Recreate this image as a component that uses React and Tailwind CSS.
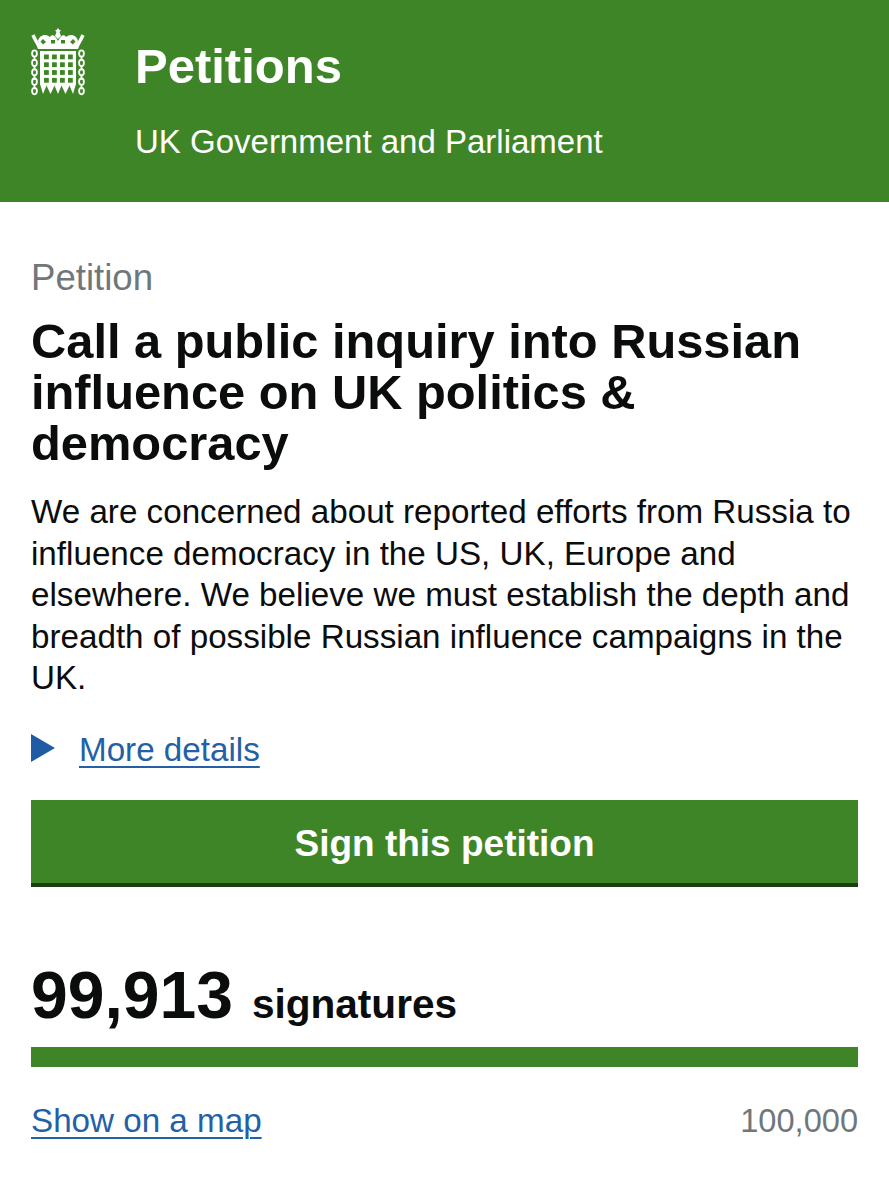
function Logo() {
    const squares = []
    for (let r = 0; r < 4; r++) {
        for (let c = 0; c < 4; c++) {
            squares.push(<rect key={`${r}-${c}`} x={14 + c * 8} y={26.5 + r * 7.8} width="4.8" height="4.8" fill="#3e8527" />)
        }
    }
    const links = [0, 1, 2, 3, 4]
    return (
        <svg width="56" height="68" viewBox="0 0 56 68" className="shrink-0">
            {/* crown */}
            <path d="M3 7 C5 12 8 16 9 19 H47 C48 16 51 12 53 7" fill="none" stroke="white" strokeWidth="3.4" />
            <path d="M8 13 C9 7 16 5 20 9 C22 6 25 7 28 13 C31 7 34 6 36 9 C40 5 47 7 48 13 L46 19 H10 Z" fill="white" />
            <path d="M13 11 l3 3 l-3 2.5 l-2.5 -3z M43 11 l-3 3 l3 2.5 l2.5 -3z M21 12 h4 v3.5 h-4z M31 12 h4 v3.5 h-4z" fill="#3e8527" />
            <path d="M28 0 L29.5 2 L31 2.5 L29.5 4 L31 8 L28 11 L25 8 L26.5 4 L25 2.5 L26.5 2 Z" fill="white" />
            <path d="M8 18.5 C18 16.5 38 16.5 48 18.5 V21 H8 Z" fill="white" />
            {/* portcullis */}
            <path d="M10 23 H46 V56 L43 66 L39.5 57.5 L35.5 66 L31.5 57.5 L28 66 L24.5 57.5 L20.5 66 L16.5 57.5 L13 66 L10 56 Z" fill="white" />
            {squares}
            {/* chains */}
            {links.map((i) => (
                <g key={i} fill="none" stroke="white" strokeWidth="1.8">
                    <ellipse cx="4.5" cy={25.5 + i * 9.4} rx="2.4" ry="3.2" />
                    <ellipse cx="51.5" cy={25.5 + i * 9.4} rx="2.4" ry="3.2" />
                    {i < 4 && <path d={`M4.5 ${28 + i * 9.4} v5 M51.5 ${28 + i * 9.4} v5`} />}
                </g>
            ))}
        </svg>
    )
}

export default function App() {
    return (
        <div className="w-[889px] h-[1200px] overflow-hidden bg-white text-[#0b0c0c] font-['Liberation_Sans',Arial,sans-serif]">

            {/* header */}
            <div className="bg-[#3e8527] h-[202px] flex text-white pl-[30px] pt-[28px]">
                <Logo />
                <div className="ml-[49px]">
                    <p className="text-[49px] leading-[52px] font-bold mt-[12px]">Petitions</p>
                    <p className="text-[33px] leading-[40px] mt-[30px]">UK Government and Parliament</p>
                </div>
            </div>

            <div className="px-[31px]">
                <p className="text-[36.6px] leading-[40px] text-[#6f777b] mt-[56px]">Petition</p>

                <h1 className="text-[48.8px] leading-[51px] font-bold mt-[18px]">
                    Call a public inquiry into Russian<br />influence on UK politics &amp;<br />democracy
                </h1>

                <p className="text-[33.2px] leading-[41.5px] mt-[22px] whitespace-nowrap">
                    We are concerned about reported efforts from Russia to<br />
                    influence democracy in the US, UK, Europe and<br />
                    elsewhere. We believe we must establish the depth and<br />
                    breadth of possible Russian influence campaigns in the<br />
                    UK.
                </p>

                {/* more details */}
                <div className="flex items-center mt-[31px] h-[40px]">
                    <div className="w-0 h-0 border-y-[14px] border-y-transparent border-l-[24px] border-l-[#1f5ca3] -mt-[3px]" />
                    <a href="#" className="ml-[24px] text-[33.2px] leading-[40px] text-[#2360a5] underline underline-offset-[5px] decoration-2">More details</a>
                </div>

                <button className="block w-[827px] h-[87px] mt-[30px] pt-[6px] bg-[#3e8527] border-b-4 border-[#1b3d10] text-white text-[37px] font-bold">
                    Sign this petition
                </button>

                {/* signature count */}
                <div className="flex items-baseline mt-[72px]">
                    <span className="text-[66px] leading-[72px] font-bold">99,913</span>
                    <span className="text-[40.6px] leading-[40px] font-bold ml-[19px]">signatures</span>
                </div>

                <div className="h-[20px] bg-[#3e8527] mt-[16px]" />

                <div className="flex justify-between items-center mt-[34px]">
                    <a href="#" className="text-[33.2px] leading-[40px] text-[#2360a5] underline underline-offset-[5px] decoration-2">Show on a map</a>
                    <span className="text-[32.6px] leading-[40px] text-[#6f777b]">100,000</span>
                </div>
            </div>
        </div>
    )
}
